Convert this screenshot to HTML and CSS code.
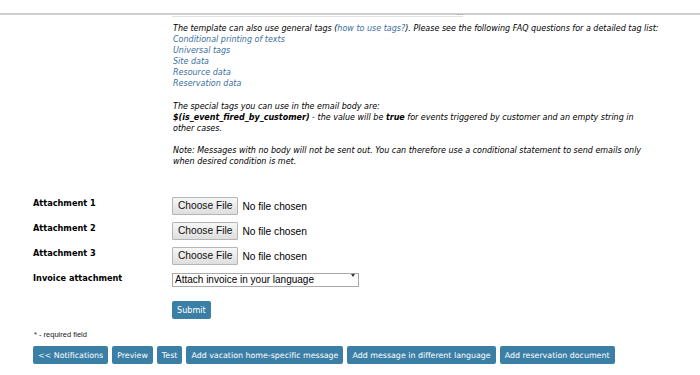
FILE: index.html
```html
<!DOCTYPE html>
<html lang="en">
<head>
	<meta charset="UTF-8"/>
	<title>Email message</title>
	<link rel="stylesheet" href="styles.css">
</head>
<body>
	<div class="top-rule"></div>
	<div class="row-wide">
		<div class="label-col"></div>
		<div class="field-col">
			<div class="textarea-end"><span class="grip"></span></div>
		</div>
	</div>

	<div class="row-wide">
		<div class="label-col"></div>
		<div class="field-col help">
			<p>The template can also use general tags (<a href="#">how to use tags?</a>). Please see the following FAQ questions for a detailed tag list:<br>
			<a href="#">Conditional printing of texts</a><br>
			<a href="#">Universal tags</a><br>
			<a href="#">Site data</a><br>
			<a href="#">Resource data</a><br>
			<a href="#">Reservation data</a></p>

			<p>The special tags you can use in the email body are:<br>
			<b>$(is_event_fired_by_customer)</b> - the value will be <b>true</b> for events triggered by customer and an empty string in<br>
			other cases.</p>

			<p>Note: Messages with no body will not be sent out. You can therefore use a conditional statement to send emails only<br>
			when desired condition is met.</p>
		</div>
	</div>

	<form class="attachments">
		<div class="form-row">
			<label class="label-col">Attachment 1</label>
			<div class="field-col"><input type="file" class="file"></div>
		</div>
		<div class="form-row">
			<label class="label-col">Attachment 2</label>
			<div class="field-col"><input type="file" class="file"></div>
		</div>
		<div class="form-row">
			<label class="label-col">Attachment 3</label>
			<div class="field-col"><input type="file" class="file"></div>
		</div>
		<div class="form-row">
			<label class="label-col">Invoice attachment</label>
			<div class="field-col">
				<span class="select-wrap">
					<select class="select">
						<option>Attach invoice in your language</option>
					</select>
				</span>
			</div>
		</div>
		<div class="form-row submit-row">
			<div class="label-col"></div>
			<div class="field-col"><button type="button" class="btn">Submit</button></div>
		</div>
	</form>

	<p class="required">* - required field</p>

	<div class="actions">
		<button class="btn">&lt;&lt; Notifications</button>
		<button class="btn">Preview</button>
		<button class="btn">Test</button>
		<button class="btn">Add vacation home-specific message</button>
		<button class="btn">Add message in different language</button>
		<button class="btn">Add reservation document</button>
	</div>
</body>
</html>
```

FILE: styles.css
```css
body{
	margin: 0;
	font-family: "DejaVu Sans", Verdana, sans-serif;
	color: #000;
	background: #fff;
}
.top-rule{
	height: 13px;
	border-bottom: 2px solid #cfcfcf;
}
.row-wide{
	display: flex;
}
.label-col{
	width: 139px;
	padding-left: 33px;
	flex: none;
}
.field-col{
	flex: 1;
}
.textarea-end{
	position: relative;
	width: 291px;
	height: 1px;
	border-bottom: 1px solid #e2e2e2;
}
.grip{
	position: absolute;
	right: 0;
	top: -1px;
	width: 6px;
	height: 2px;
	border-top: 1px dotted #aaa;
}
.help{
	padding-top: 6px;
	font-size: 8px;
	font-style: italic;
	line-height: 11.1px;
	white-space: nowrap;
}
.help p{
	margin: 0 0 11px 1px;
}
.help a{
	color: #3a6f9e;
	text-decoration: none;
}
.attachments{
	margin-top: 14px;
}
.form-row{
	display: flex;
	align-items: center;
	height: 25px;
}
.form-row .label-col{
	font-size: 8.2px;
	font-weight: bold;
	margin-top: -3px;
}
.file{
	font-family: "Liberation Sans", Arial, sans-serif;
	font-size: 10.2px;
	color: #000;
}
.file::file-selector-button{
	font-family: "Liberation Sans", Arial, sans-serif;
	font-size: 10.2px;
	height: 18px;
	padding: 0 5px;
	margin-right: 4px;
	border: 1px solid #b5b5b5;
	border-radius: 1px;
	background: linear-gradient(#f6f6f6, #dedede);
	color: #111;
}
.select-wrap{
	position: relative;
	display: inline-block;
	margin-bottom: 4px;
}
.select-wrap::after{
	content: "";
	position: absolute;
	right: 4px;
	top: 6px;
	border-left: 2px solid transparent;
	border-right: 2px solid transparent;
	border-top: 3px solid #333;
}
.select{
	appearance: none;
	width: 187px;
	height: 14px;
	padding: 0 0 0 2px;
	border: 1px solid #a9a9a9;
	border-radius: 0;
	background: #fff;
	font-family: "Liberation Sans", Arial, sans-serif;
	font-size: 10px;
	line-height: 12px;
	color: #000;
}
.submit-row{
	height: 27px;
	align-items: flex-end;
}
.btn{
	font-family: "DejaVu Sans", Tahoma, sans-serif;
	font-size: 7.9px;
	height: 18px;
	padding: 0 5px;
	border: 0;
	border-radius: 2px;
	background: #3c7fa6;
	color: #fff;
}
.submit-row .btn{
	font-size: 8.1px;
}
.required{
	margin: 11px 0 0 34px;
	font-size: 7.5px;
	font-family: "Liberation Sans", Arial, sans-serif;
	color: #222;
}
.actions{
	display: flex;
	gap: 4px;
	padding-left: 33px;
	margin-top: 7px;
}
```
